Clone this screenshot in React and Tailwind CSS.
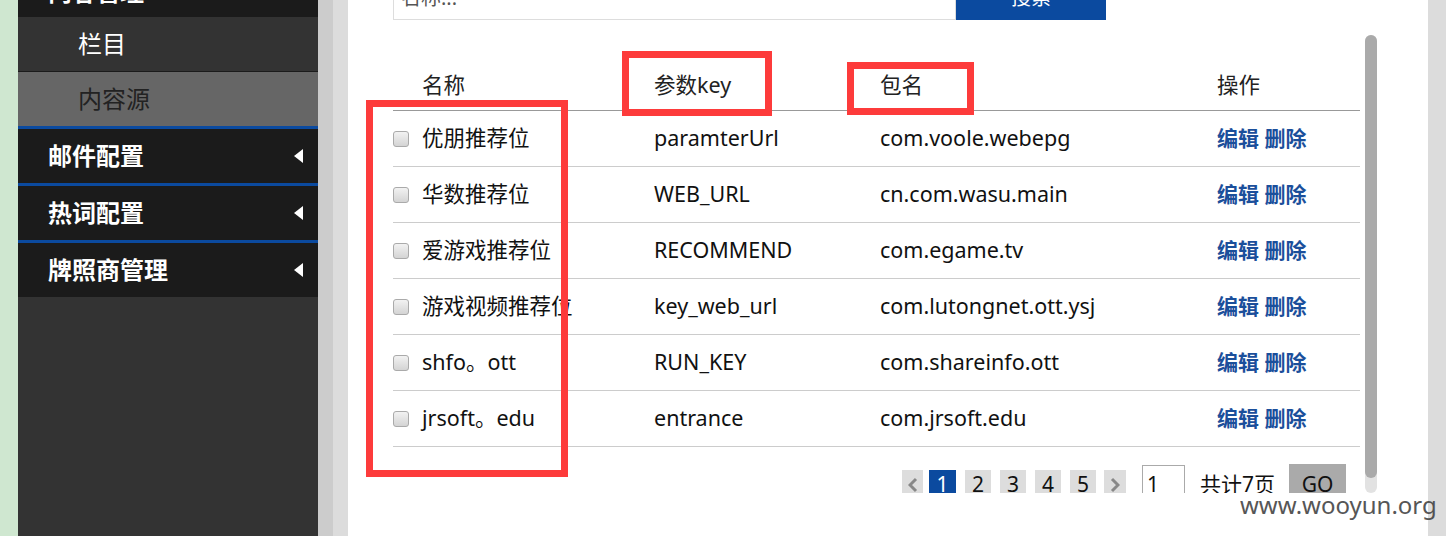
const rows = [
  { name: '优朋推荐位', key: 'paramterUrl', pkg: 'com.voole.webepg' },
  { name: '华数推荐位', key: 'WEB_URL', pkg: 'cn.com.wasu.main' },
  { name: '爱游戏推荐位', key: 'RECOMMEND', pkg: 'com.egame.tv' },
  { name: '游戏视频推荐位', key: 'key_web_url', pkg: 'com.lutongnet.ott.ysj' },
  { name: 'shfo。ott', key: 'RUN_KEY', pkg: 'com.shareinfo.ott' },
  { name: 'jrsoft。edu', key: 'entrance', pkg: 'com.jrsoft.edu' },
];

const font = { fontFamily: '"Noto Sans", "Noto Sans CJK SC", sans-serif' };

function Caret() {
  return <span className="w-0 h-0 border-y-[7px] border-y-transparent border-r-[9px] border-r-white" />;
}

function MenuGroup({ label }) {
  return (
    <div className="h-[57px] border-t-[3px] border-[#0b4a9f] bg-[#1b1b1b] flex items-center justify-between pl-[30px] pr-[15px]">
      <span className="text-[24px] font-bold text-white leading-none">{label}</span>
      <Caret />
    </div>
  );
}

function Chevron({ dir }) {
  return (
    <svg width="10" height="16" viewBox="0 0 10 16">
      <polyline
        points={dir === 'left' ? '8,2 2,8 8,14' : '2,2 8,8 2,14'}
        fill="none"
        stroke="#888"
        strokeWidth="3"
      />
    </svg>
  );
}

function Checkbox() {
  return <span className="w-4 h-4 rounded-[3px] border border-[#aaa] bg-linear-to-b from-[#f2f2f2] to-[#d4d4d4] shrink-0" />;
}

export default function App() {
  return (
    <div className="w-[1446px] h-[536px] flex overflow-hidden relative bg-white" style={font}>
      <div className="w-[18px] bg-[#cfe7d0]" />

      {/* sidebar */}
      <aside className="w-[300px] bg-[#333] flex flex-col">
        <div className="h-[17px] overflow-hidden bg-[#1b1b1b]">
          <div className="h-[54px] -mt-[35px] flex items-center pl-[30px]">
            <span className="text-[24px] font-bold text-white leading-none">内容管理</span>
          </div>
        </div>
        <div className="h-[55px] bg-[#333] border-b border-[#1b1b1b] flex items-center pl-[60px] text-[24px] text-white leading-none">
          栏目
        </div>
        <div className="h-[54px] bg-[#666] flex items-center pl-[60px] text-[24px] text-[#222] leading-none">
          内容源
        </div>
        <MenuGroup label="邮件配置" />
        <MenuGroup label="热词配置" />
        <MenuGroup label="牌照商管理" />
      </aside>

      <div className="w-[15px] bg-[#cccccc]" />
      <div className="w-[15px] bg-[#dcdcdc]" />

      {/* main */}
      <main className="flex-1 relative bg-white">
        <div className="h-[493px] overflow-hidden pl-[45px] pr-[68px]">
          <div className="flex h-[44px] -mt-[24px]">
            <div className="w-[563px] h-full border border-[#ddd] flex items-center pl-[7px] text-[20px] text-[#555]">名称...</div>
            <button className="w-[150px] h-full bg-[#0b4a9f] text-white text-[20px]">搜索</button>
          </div>

          <div className="mt-[40px] h-[51px] border-b border-[#999] grid grid-cols-[261px_226px_337px_1fr] items-center text-[21.5px] text-[#222]">
            <span className="pl-[29px]">名称</span>
            <span>参数key</span>
            <span>包名</span>
            <span>操作</span>
          </div>

          {rows.map((r) => (
            <div key={r.key} className="h-[56px] border-b border-[#ccc] grid grid-cols-[261px_226px_337px_1fr] items-center text-[21.5px] text-[#111]">
              <div className="flex items-center gap-[13px]">
                <Checkbox />
                <span className="whitespace-nowrap">{r.name}</span>
              </div>
              <span>{r.key}</span>
              <span>{r.pkg}</span>
              <span className="font-bold text-[#1b4f9b] text-[21px]">编辑 删除</span>
            </div>
          ))}

          <div className="mt-[17px] h-[42px] flex items-center justify-end pr-[14px] text-[21px] text-[#111]">
            <span className="w-[21px] h-[30px] bg-[#ddd] flex items-center justify-center"><Chevron dir="left" /></span>
            <span className="ml-[6px] w-[27px] h-[30px] bg-[#0b4a9f] text-white flex items-center justify-center">1</span>
            {['2', '3', '4', '5'].map((n) => (
              <span key={n} className="ml-[9px] w-[26px] h-[30px] bg-[#ddd] flex items-center justify-center">{n}</span>
            ))}
            <span className="ml-[8px] w-[22px] h-[30px] bg-[#ddd] flex items-center justify-center"><Chevron dir="right" /></span>
            <span className="ml-[16px] w-[43px] h-[40px] border border-[#aaa] pl-[4px] flex items-center">1</span>
            <span className="ml-[15px] w-[75px]">共计7页</span>
            <span className="ml-[14px] w-[57px] h-[42px] bg-[#aaa] flex items-center justify-center">GO</span>
          </div>
        </div>

        {/* scrollbar */}
        <div className="absolute left-[1017px] top-[35px] w-3 h-[458px] rounded-full bg-[#e2e2e2]">
          <div className="w-3 h-[443px] rounded-full bg-[#aaa]" />
        </div>
      </main>

      <div className="w-[18px] bg-[#dcdcdc]" />

      {/* annotations */}
      <div className="absolute left-[366px] top-[100px] w-[202px] h-[377px] border-[7px] border-[#fd3b3b]" />
      <div className="absolute left-[622px] top-[51px] w-[150px] h-[65px] border-[7px] border-[#fd3b3b]" />
      <div className="absolute left-[847px] top-[62px] w-[127px] h-[53px] border-[7px] border-[#fd3b3b]" />

      <span className="absolute left-[1240px] top-[493px] text-[24px] text-[#444] leading-none opacity-90">www.wooyun.org</span>
    </div>
  );
}
